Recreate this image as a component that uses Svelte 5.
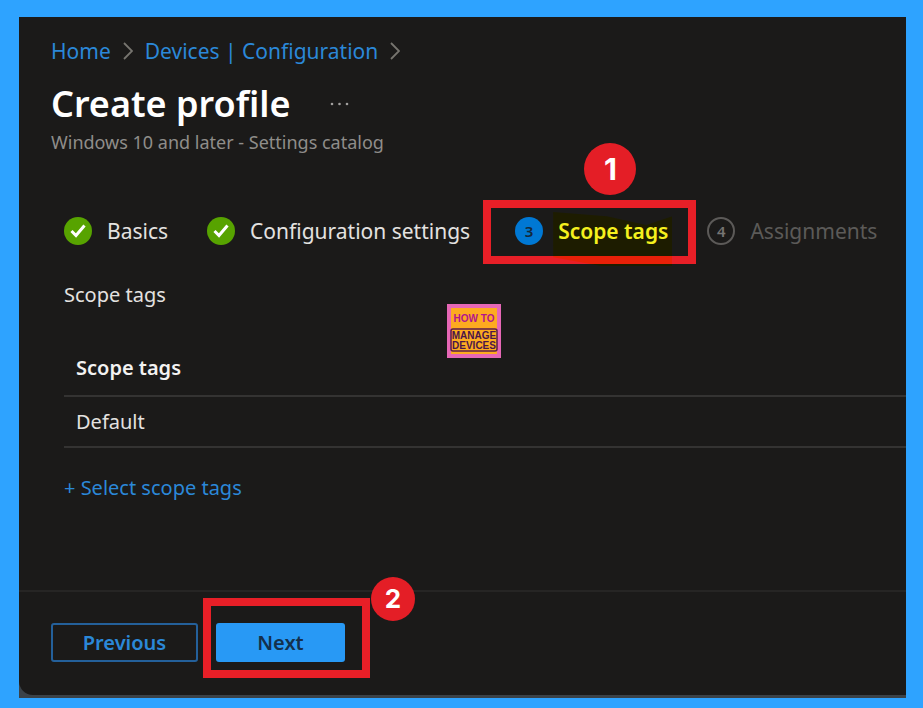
<script lang="ts">
	type StepState = 'done' | 'current' | 'upcoming';

	interface Step {
		label: string;
		state: StepState;
	}

	const crumbs = ['Home', 'Devices | Configuration'];

	const steps: Step[] = [
		{ label: 'Basics', state: 'done' },
		{ label: 'Configuration settings', state: 'done' },
		{ label: 'Scope tags', state: 'current' },
		{ label: 'Assignments', state: 'upcoming' }
	];

	const scopeTags = ['Default'];
</script>

<div class="frame">
	<div class="window">
		<main class="panel">
			<header class="header">
				<nav class="breadcrumb" aria-label="Breadcrumb">
					{#each crumbs as crumb}
						<a href="#top">{crumb}</a>
						<svg class="chevron" viewBox="0 0 10 18" fill="none" stroke="currentColor" stroke-width="1.8">
							<path d="M1 1l8 8-8 8" />
						</svg>
					{/each}
				</nav>
				<div class="title-row">
					<h1>Create profile</h1>
					<button class="more" aria-label="More actions">
						<svg viewBox="0 0 20 4" fill="currentColor">
							<circle cx="2" cy="2" r="1.3" />
							<circle cx="9.5" cy="2" r="1.3" />
							<circle cx="17" cy="2" r="1.3" />
						</svg>
					</button>
				</div>
				<p class="subtitle">Windows 10 and later - Settings catalog</p>
			</header>

			<section class="content">
				<div class="steps">
					{#each steps as step, i}
						<button class="step {step.state}">
							{#if step.state === 'done'}
								<svg class="step-icon" viewBox="0 0 28 28">
									<circle cx="14" cy="14" r="14" fill="#57a300" />
									<path d="M7.5 14l4.500 4.500L20.500 8.500" fill="none" stroke="#fff" stroke-width="3" />
								</svg>
							{:else}
								<span class="step-icon step-number">{i + 1}</span>
							{/if}
							<span class="step-label">{step.label}</span>
							{#if step.state === 'current'}
								<span class="callout-box">
									<span class="marker-tint"></span>
								</span>
								<span class="callout-number large">1</span>
							{/if}
						</button>
					{/each}
				</div>

				<p class="section-label">Scope tags</p>

				<table>
					<thead>
						<tr><th scope="col">Scope tags</th></tr>
					</thead>
					<tbody>
						{#each scopeTags as tag}
							<tr><td>{tag}</td></tr>
						{/each}
					</tbody>
				</table>

				<a class="select-link" href="#select">+ Select scope tags</a>

				<svg class="logo" viewBox="0 0 54 54" role="img" aria-label="How to manage devices">
					<rect width="54" height="54" fill="#e667b5" />
					<rect x="4" y="4" width="46" height="46" fill="#fdaa20" />
					<text x="27" y="18" font-size="10" fill="#b3158c">HOW TO</text>
					<rect x="4" y="25" width="46" height="22" rx="2" fill="none" stroke="#5b1d4b" stroke-width="1.5" />
					<text x="27" y="35" font-size="10" fill="#4a1549">MANAGE</text>
					<text x="27" y="45" font-size="10" fill="#4a1549">DEVICES</text>
				</svg>
			</section>

			<footer class="footer">
				<button class="btn secondary">Previous</button>
				<div class="next-wrap">
					<button class="btn primary">Next</button>
					<span class="callout-box"></span>
					<span class="callout-number">2</span>
				</div>
			</footer>
		</main>
	</div>
</div>

<style>
	:global(body) {
		margin: 0;
		background: #2ea3ff;
	}

	.frame {
		box-sizing: border-box;
		display: flex;
		min-height: 100vh;
		padding: 17px 17px 10px 19px;
		background: #2ea3ff;
		font-family: 'Noto Sans', 'Open Sans', sans-serif;
		color: #e4e2e0;
	}

	.window {
		flex: 1;
		display: flex;
		min-width: 0;
		padding-bottom: 3px;
		background: #3b4248;
	}

	.panel {
		flex: 1;
		display: flex;
		flex-direction: column;
		min-width: 0;
		background: #1b1a19;
		border-bottom-left-radius: 14px;
	}

	h1,
	p {
		margin: 0;
	}

	button {
		padding: 0;
		border: none;
		background: none;
		color: inherit;
		font-family: inherit;
		cursor: pointer;
	}

	a {
		color: #2b88d8;
		text-decoration: none;
	}

	.header {
		padding: 20px 32px 0;
	}

	.breadcrumb {
		display: flex;
		align-items: center;
		gap: 12px;
		font-size: 21px;
		line-height: 28px;
	}

	.chevron {
		width: 10px;
		height: 18px;
		color: #77756f;
	}

	.title-row {
		display: flex;
		align-items: center;
		gap: 40px;
		margin-top: 17px;
	}

	h1 {
		font-size: 36px;
		font-weight: 600;
		line-height: 44px;
		color: #fff;
	}

	.more {
		display: flex;
		color: #a19f9d;
	}

	.more svg {
		width: 20px;
		height: 4px;
	}

	.subtitle {
		margin-top: 4px;
		font-size: 18px;
		line-height: 24px;
		color: #8f8d8a;
	}

	.content {
		position: relative;
		flex: 1;
		padding: 63px 0 32px 45px;
	}

	.steps {
		display: flex;
		gap: 39px;
	}

	.step {
		position: relative;
		display: flex;
		align-items: center;
		gap: 15px;
		font-size: 21px;
		line-height: 28px;
		white-space: nowrap;
	}

	.step-icon {
		flex-shrink: 0;
		width: 28px;
		height: 28px;
	}

	.step-number {
		box-sizing: border-box;
		border-radius: 50%;
		font-size: 15px;
		font-weight: 600;
		text-align: center;
	}

	.current {
		margin-left: 6px;
		font-weight: 600;
	}

	.current .step-number {
		background: #0078d4;
		color: #14283a;
	}

	.current .step-label {
		z-index: 1;
		color: #f5f01e;
	}

	.upcoming {
		color: #5c5a58;
	}

	.upcoming .step-number {
		border: 2px solid #5c5a58;
		line-height: 24px;
		color: #777573;
	}

	.callout-box {
		position: absolute;
		inset: -17px -28px -19px -32px;
		border: 8px solid #e81f27;
		pointer-events: none;
	}

	.marker-tint {
		position: absolute;
		inset: 4px 16px -10px 62px;
		background: linear-gradient(to top, #1d1c00 2px, #e82008 2px 10px, #1d1c00 10px);
		clip-path: polygon(0 0, 45% 8%, 78% 24%, 100% 8%, 100% 100%, 40% 100%, 0 84%);
	}

	.callout-number {
		position: absolute;
		top: -46px;
		right: -70px;
		width: 44px;
		height: 44px;
		border-radius: 50%;
		background: #e41e26;
		font-family: Inter, 'Liberation Sans', sans-serif;
		font-size: 26px;
		font-weight: 700;
		line-height: 44px;
		text-align: center;
		color: #fff;
	}

	.callout-number.large {
		top: -74px;
		right: 32px;
		width: 52px;
		height: 52px;
		font-size: 30px;
		line-height: 52px;
	}

	.section-label {
		margin-top: 38px;
		font-size: 20px;
		line-height: 24px;
	}

	table {
		width: 100%;
		margin-top: 34px;
		border-collapse: separate;
		border-spacing: 0;
		font-size: 20px;
		line-height: 24px;
	}

	th,
	td {
		padding: 15px 12px;
		border-bottom: 2px solid #343332;
		text-align: left;
	}

	td {
		padding: 13px 12px 12px;
	}

	th {
		font-weight: 600;
		color: #f3f2f1;
	}

	.select-link {
		display: inline-block;
		margin-top: 28px;
		font-size: 20px;
		line-height: 24px;
	}

	.logo {
		position: absolute;
		top: 150px;
		left: 428px;
		width: 54px;
		height: 54px;
	}

	.logo text {
		font-family: 'Liberation Sans Narrow', 'Liberation Sans', sans-serif;
		font-weight: 700;
		text-anchor: middle;
	}

	.footer {
		display: flex;
		gap: 18px;
		padding: 31px 32px 33px;
		border-top: 2px solid #262524;
	}

	.btn {
		box-sizing: border-box;
		min-width: 129px;
		height: 39px;
		border-radius: 3px;
		font-size: 20px;
		font-weight: 600;
		line-height: 24px;
	}

	.secondary {
		min-width: 147px;
		border: 2px solid #24609a;
		color: #2b88d8;
	}

	.primary {
		background: #2899f5;
		color: #14304c;
	}

	.next-wrap {
		position: relative;
	}

	.next-wrap .callout-box {
		inset: -25px -25px -16px -13px;
	}
</style>
